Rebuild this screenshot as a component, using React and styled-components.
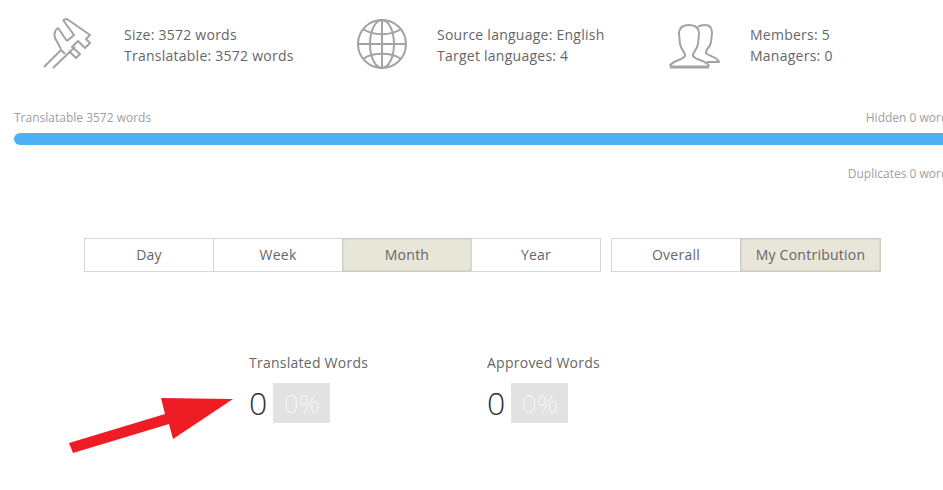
import styled, { createGlobalStyle } from 'styled-components';

const STATS = [
  { icon: 'caliper', lines: ['Size: 3572 words', 'Translatable: 3572 words'] },
  { icon: 'globe', lines: ['Source language: English', 'Target languages: 4'] },
  { icon: 'users', lines: ['Members: 5', 'Managers: 0'] }
];

const PERIODS = [
  { label: 'Day' },
  { label: 'Week' },
  { label: 'Month', active: true },
  { label: 'Year' }
];

const SCOPES = [
  { label: 'Overall' },
  { label: 'My Contribution', width: 141, active: true }
];

const TOTALS = [
  { label: 'Translated Words', value: 0, percent: '0%' },
  { label: 'Approved Words', value: 0, percent: '0%' }
];

function CaliperIcon() {
  return (
    <IconSvg width="50" height="52" viewBox="0 0 50 52">
      <path d="M1 49 L18 32 L22 36" />
      <path d="M10 50 L32 29" />
      <path d="M18 31 L12 20 C11 16 12 12 15 10 L24 23" />
      <path d="M20 2 L24 1 L47 17 L43 21 L47 25 L42 30 L35 23 L29 29 L37 36 L33 40 L26 33" />
      <path d="M20 2 L31 17 L24 23" />
    </IconSvg>
  );
}

function GlobeIcon() {
  return (
    <IconSvg width="52" height="52" viewBox="0 0 52 52">
      <circle cx="26" cy="26" r="24" />
      <ellipse cx="26" cy="26" rx="12" ry="24" />
      <path d="M26 2 V50" />
      <path d="M2 26 H50" />
      <path d="M7 11 C17 18 35 18 45 11" />
      <path d="M7 41 C17 34 35 34 45 41" />
    </IconSvg>
  );
}

function UsersIcon() {
  return (
    <IconSvg width="52" height="50" viewBox="0 0 52 50">
      <path d="M1 47 C2 42 14 41 16 37 C17 34 12 31 11 25 L10 15 C10 9 14 6 20 6 C26 6 30 9 30 15 L29 25 C28 31 23 34 24 37 C26 41 39 42 40 47" />
      <path d="M1 48 H40" strokeWidth="3" />
      <path d="M29 8 C31 6 33 6 36 6 C41 6 43 9 43 14 L42 23 C41 29 36 31 37 34 C39 37 49 38 50 43 H38" />
    </IconSvg>
  );
}

const ICONS = { caliper: CaliperIcon, globe: GlobeIcon, users: UsersIcon };

export default function App() {
  return (
    <Page>
      <GlobalStyle />
      <StatsRow>
        {STATS.map((stat) => {
          const Icon = ICONS[stat.icon];
          return (
            <Stat key={stat.icon}>
              <IconBox>
                <Icon />
              </IconBox>
              <StatText>
                {stat.lines.map((line) => (
                  <div key={line}>{line}</div>
                ))}
              </StatText>
            </Stat>
          );
        })}
      </StatsRow>

      <Progress>
        <ProgressLabels>
          <span>Translatable 3572 words</span>
          <span>Hidden 0 words</span>
        </ProgressLabels>
        <Bar />
        <Duplicates>Duplicates 0 words</Duplicates>
      </Progress>

      <Filters>
        <ButtonGroup>
          {PERIODS.map((p) => (
            <FilterButton key={p.label} $active={p.active}>
              {p.label}
            </FilterButton>
          ))}
        </ButtonGroup>
        <ButtonGroup>
          {SCOPES.map((s) => (
            <FilterButton key={s.label} $width={s.width} $active={s.active}>
              {s.label}
            </FilterButton>
          ))}
        </ButtonGroup>
      </Filters>

      <Totals>
        {TOTALS.map((t) => (
          <Total key={t.label}>
            <TotalLabel>{t.label}</TotalLabel>
            <TotalValues>
              <TotalValue>{t.value}</TotalValue>
              <Percent>{t.percent}</Percent>
            </TotalValues>
          </Total>
        ))}
      </Totals>

      <Arrow width="170" height="60" viewBox="0 0 170 60">
        <polygon points="96,3 168,4 108,44 104,29 8,58 4,48 100,19" />
      </Arrow>
    </Page>
  );
}

// стили
const GlobalStyle = createGlobalStyle`
  html, body {
    margin: 0;
    background: #fff;
  }
`;

const Page = styled.div`
  position: relative;
  width: 943px;
  height: 490px;
  overflow: hidden;
  background: #fff;
  font-family: 'Open Sans', 'Liberation Sans', sans-serif;
  color: #555;
`;

const StatsRow = styled.div`
  display: flex;
  padding: 19px 0 0 43px;
`;

const Stat = styled.div`
  display: flex;
  flex-shrink: 0;
  align-items: center;
  width: 313px;
  height: 52px;
`;

const IconBox = styled.div`
  display: flex;
  flex-shrink: 0;
  width: 81px;
  margin-top: -3px;
`;

const IconSvg = styled.svg`
  fill: none;
  stroke: #a3a3a3;
  stroke-width: 2;
  stroke-linejoin: round;
`;

const StatText = styled.div`
  font-size: 14px;
  line-height: 21px;
  letter-spacing: 0.25px;
  color: #666;
  white-space: nowrap;
`;

const Progress = styled.div`
  width: 940px;
  margin: 38px 0 0 14px;
`;

const ProgressLabels = styled.div`
  display: flex;
  justify-content: space-between;
  font-size: 12px;
  line-height: 17px;
  color: #a0a0a0;
`;

const Bar = styled.div`
  height: 12px;
  margin-top: 7px;
  border-radius: 6px;
  background: #4db2f5;
`;

const Duplicates = styled.div`
  margin-top: 20px;
  font-size: 12px;
  line-height: 17px;
  color: #a0a0a0;
  text-align: right;
`;

const Filters = styled.div`
  display: flex;
  gap: 10px;
  margin: 56px 0 0 84px;
`;

const ButtonGroup = styled.div`
  display: flex;
`;

const FilterButton = styled.div`
  display: flex;
  align-items: center;
  justify-content: center;
  box-sizing: border-box;
  width: ${(p) => p.$width || 130}px;
  height: 34px;
  margin-left: -1px;
  padding-bottom: 2px;
  border: 1px solid ${(p) => (p.$active ? '#cfcdc3' : '#d6d6d6')};
  background: ${(p) => (p.$active ? '#e8e5d9' : '#fff')};
  box-shadow: ${(p) => (p.$active ? 'inset 0 0 2px rgba(0, 0, 0, 0.18)' : 'none')};
  font-size: 14px;
  letter-spacing: 0.25px;
  color: #666;

  &:first-child {
    margin-left: 0;
  }
`;

const Totals = styled.div`
  display: flex;
  margin: 81px 0 0 249px;
`;

const Total = styled.div`
  width: 238px;
`;

const TotalLabel = styled.div`
  font-size: 14px;
  line-height: 20px;
  letter-spacing: 0.25px;
  color: #666;
`;

const TotalValues = styled.div`
  display: flex;
  align-items: center;
  gap: 6px;
  margin-top: 10px;
`;

const TotalValue = styled.div`
  font-size: 32px;
  font-weight: 300;
  line-height: 40px;
  color: #333;
`;

const Percent = styled.div`
  width: 57px;
  height: 40px;
  background: #e2e2e2;
  font-size: 26px;
  font-weight: 300;
  line-height: 40px;
  text-align: center;
  color: #f4f4f4;
`;

const Arrow = styled.svg`
  position: absolute;
  left: 65px;
  top: 395px;
  fill: #ee1c25;
`;
